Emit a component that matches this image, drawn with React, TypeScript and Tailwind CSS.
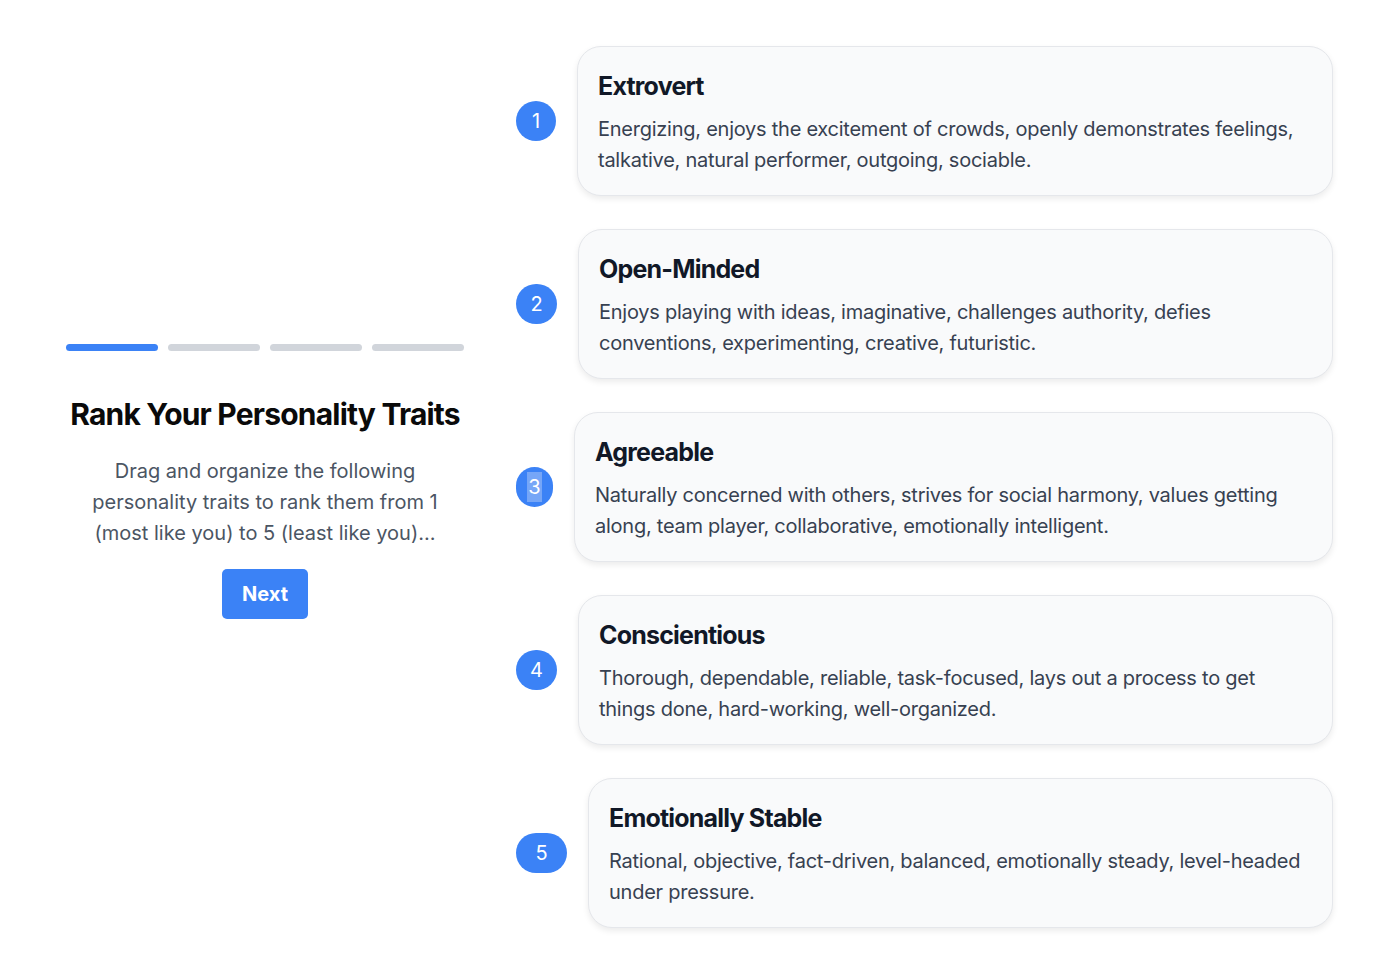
const traits = [
  {
    title: 'Extrovert',
    desc: 'Energizing, enjoys the excitement of crowds, openly demonstrates feelings, talkative, natural performer, outgoing, sociable.',
    badge: 'w-[40px]',
    selected: false,
  },
  {
    title: 'Open-Minded',
    desc: 'Enjoys playing with ideas, imaginative, challenges authority, defies conventions, experimenting, creative, futuristic.',
    badge: 'w-[41px]',
    selected: false,
  },
  {
    title: 'Agreeable',
    desc: 'Naturally concerned with others, strives for social harmony, values getting along, team player, collaborative, emotionally intelligent.',
    badge: 'w-[37px]',
    selected: true,
  },
  {
    title: 'Conscientious',
    desc: 'Thorough, dependable, reliable, task-focused, lays out a process to get things done, hard-working, well-organized.',
    badge: 'w-[41px]',
    selected: false,
  },
  {
    title: 'Emotionally Stable',
    desc: 'Rational, objective, fact-driven, balanced, emotionally steady, level-headed under pressure.',
    badge: 'w-[51px]',
    selected: false,
  },
]

export default function App() {
  return (
    <div className="flex h-[960px] w-[1400px] bg-white font-['Inter',sans-serif] antialiased">
      {/* Left: intro */}
      <div className="flex w-[516px] shrink-0 items-center pl-[66px] pt-[3px]">
        <div className="flex w-[398px] flex-col items-center">
          <div className="flex w-full gap-[10px]">
            <div className="h-[7px] flex-1 rounded-full bg-[#3b82f6]" />
            <div className="h-[7px] flex-1 rounded-full bg-[#d1d5db]" />
            <div className="h-[7px] flex-1 rounded-full bg-[#d1d5db]" />
            <div className="h-[7px] flex-1 rounded-full bg-[#d1d5db]" />
          </div>
          <h1 className="mt-[45px] whitespace-nowrap text-center text-[30px] font-bold leading-[36px] tracking-[-0.8px] text-[#0a0a0a]">
            Rank Your Personality Traits
          </h1>
          <p className="mt-[24px] max-w-[370px] text-center text-[20px] leading-[31px] text-[#4b5563]">
            Drag and organize the following personality traits to rank them from 1 (most like you) to 5 (least like you)...
          </p>
          <button className="mt-[20px] h-[50px] w-[86px] rounded-[5px] bg-[#3b82f6] text-[20px] font-bold text-white">
            Next
          </button>
        </div>
      </div>

      {/* Right: sortable list */}
      <div className="flex w-[817px] flex-col gap-[33px] pt-[46px]">
        {traits.map((t, i) => (
          <div key={t.title} className="flex items-center gap-[21px]">
            <div
              className={`flex h-[40px] ${t.badge} shrink-0 items-center justify-center rounded-full bg-[#3b82f6] text-[20px] text-white`}
            >
              {t.selected ? (
                <span className="bg-[#76a6f7] px-[1px] leading-[30px]">{i + 1}</span>
              ) : (
                i + 1
              )}
            </div>
            <div className="flex h-[150px] flex-1 flex-col rounded-[24px] border border-[#e5e7eb] bg-[#f9fafb] pb-[19px] pl-[20px] pr-[18px] pt-[23px] shadow-[0_3px_6px_rgba(0,0,0,0.08)]">
              <h2 className="text-[25px] font-bold leading-[32px] tracking-[-0.8px] text-[#111827]">{t.title}</h2>
              <p className="mt-[12px] text-[20px] leading-[31px] tracking-[-0.25px] text-[#374151]">{t.desc}</p>
            </div>
          </div>
        ))}
      </div>
    </div>
  )
}
